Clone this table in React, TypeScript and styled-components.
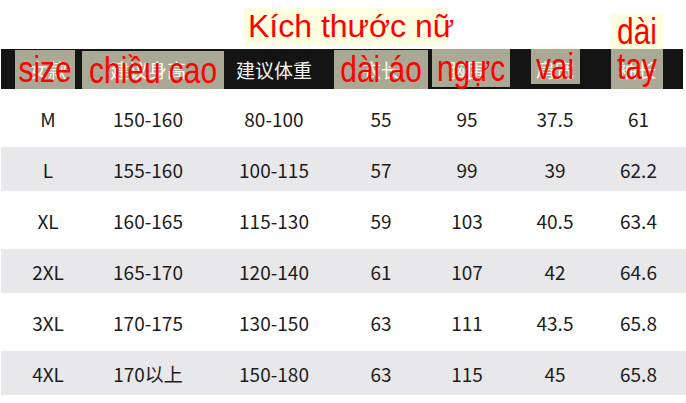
import styled, { createGlobalStyle } from 'styled-components';

const GlobalStyle = createGlobalStyle`
body {
    margin: 0;
    background: #ffffff;
}
`;

const COLS = '94px 106px 146px 68px 104px 72px 1fr';

const Page = styled.div`
position: relative;
width: 686px;
height: 403px;
overflow: hidden;
background: #ffffff;
font-family: "Noto Sans CJK SC", "Noto Sans", sans-serif;
`;

const TitleStrip = styled.div`
height: 49px;
box-sizing: border-box;
padding: 8px 0 0 244px;
`;

const Title = styled.div`
display: inline-block;
width: 204px;
height: 38px;
box-sizing: border-box;
padding: 2px 0 0 4px;
background: #fffde0;
color: #ff0000;
font-family: "Liberation Sans", Arial, sans-serif;
font-size: 32px;
line-height: 32px;
white-space: nowrap;
`;

const Table = styled.div`
margin-left: 1px;
`;

const HeaderRow = styled.div`
display: grid;
grid-template-columns: ${COLS};
align-items: center;
width: 682px;
height: 40px;
background: #141414;
color: #f4f4f4;
font-size: 19px;
`;

const Row = styled.div<{ $shaded: boolean }>`
display: grid;
grid-template-columns: ${COLS};
align-items: center;
height: ${p => (p.$shaded ? 44 : 58)}px;
background: ${p => (p.$shaded ? '#e8e8ea' : '#ffffff')};
color: #1c1c1c;
font-size: 19px;
`;

const Cell = styled.div`
text-align: center;
white-space: nowrap;
`;

const Note = styled.div<{ $x: number; $y: number; $w: number; $h: number; $top?: boolean }>`
position: absolute;
left: ${p => p.$x}px;
top: ${p => p.$y}px;
width: ${p => p.$w}px;
height: ${p => p.$h}px;
box-sizing: border-box;
padding-top: ${p => (p.$top ? 0 : 2)}px;
display: flex;
flex-direction: column;
align-items: center;
background: ${p =>
    p.$top
        ? 'linear-gradient(#fffde0 0 35px, rgba(255, 254, 222, 0.64) 35px)'
        : 'rgba(255, 254, 222, 0.64)'};
color: #ff0000;
font-family: "Liberation Sans", Arial, sans-serif;
font-size: 36px;
line-height: 35px;
`;

const NoteText = styled.span`
display: inline-block;
white-space: nowrap;
transform: scaleX(0.83);
`;

const headers = ['女款', '建议身高', '建议体重', '衣长', '胸围', '肩宽', '袖长'];

const rows = [
    ['M', '150-160', '80-100', '55', '95', '37.5', '61'],
    ['L', '155-160', '100-115', '57', '99', '39', '62.2'],
    ['XL', '160-165', '115-130', '59', '103', '40.5', '63.4'],
    ['2XL', '165-170', '120-140', '61', '107', '42', '64.6'],
    ['3XL', '170-175', '130-150', '63', '111', '43.5', '65.8'],
    ['4XL', '170以上', '150-180', '63', '115', '45', '65.8'],
];

// red notes pasted over the chinese header
const notes = [
    { x: 15, y: 50, w: 60, h: 39, lines: ['size'] },
    { x: 82, y: 51, w: 142, h: 38, lines: ['chiều cao'] },
    { x: 334, y: 50, w: 94, h: 39, lines: ['dài áo'] },
    { x: 432, y: 49, w: 78, h: 38, lines: ['ngực'] },
    { x: 531, y: 47, w: 49, h: 37, lines: ['vai'] },
    { x: 611, y: 14, w: 52, h: 75, lines: ['dài', 'tay'], top: true },
];

export const App = () => {

    return (
        <Page>
            <GlobalStyle />
            <TitleStrip>
                <Title>Kích thước nữ</Title>
            </TitleStrip>
            <Table>
                <HeaderRow>
                    {headers.map(h => <Cell key={h}>{h}</Cell>)}
                </HeaderRow>
                {rows.map((r, i) => (
                    <Row key={r[0]} $shaded={i % 2 === 1}>
                        {r.map((c, j) => <Cell key={j}>{c}</Cell>)}
                    </Row>
                ))}
            </Table>
            {notes.map(n => (
                <Note key={n.lines.join()} $x={n.x} $y={n.y} $w={n.w} $h={n.h} $top={n.top}>
                    {n.lines.map(l => <NoteText key={l}>{l}</NoteText>)}
                </Note>
            ))}
        </Page>
    )
}

export default App;
